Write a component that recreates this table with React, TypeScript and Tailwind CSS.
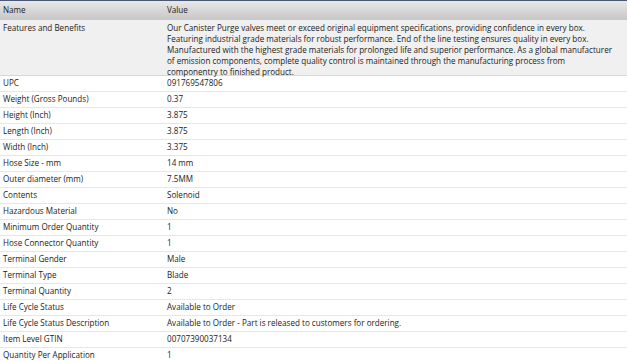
import React from "react";

const rows: [string, string][] = [
  ["UPC", "091769547806"],
  ["Weight (Gross Pounds)", "0.37"],
  ["Height (Inch)", "3.875"],
  ["Length (Inch)", "3.875"],
  ["Width (Inch)", "3.375"],
  ["Hose Size - mm", "14 mm"],
  ["Outer diameter (mm)", "7.5MM"],
  ["Contents", "Solenoid"],
  ["Hazardous Material", "No"],
  ["Minimum Order Quantity", "1"],
  ["Hose Connector Quantity", "1"],
  ["Terminal Gender", "Male"],
  ["Terminal Type", "Blade"],
  ["Terminal Quantity", "2"],
  ["Life Cycle Status", "Available to Order"],
  ["Life Cycle Status Description", "Available to Order - Part is released to customers for ordering."],
  ["Item Level GTIN", "00707390037134"],
  ["Quantity Per Application", "1"],
];

const features = [
  "Our Canister Purge valves meet or exceed original equipment specifications, providing confidence in every box.",
  "Featuring industrial grade materials for robust performance. End of the line testing ensures quality in every box.",
  "Manufactured with the highest grade materials for prolonged life and superior performance. As a global manufacturer",
  "of emission components, complete quality control is maintained through the manufacturing process from",
  "componentry to finished product.",
];

export default function App() {
  return (
    <div
      className="w-[627px] h-[361px] overflow-hidden bg-white text-[#222] text-[8.1px]"
      style={{ fontFamily: "'Open Sans', 'DejaVu Sans', sans-serif" }}
    >
      <div className="h-[20px] border-t border-[#4b5875] bg-gradient-to-b from-[#e8e8e8] to-[#c6c6c6] grid grid-cols-[167px_1fr] items-center pb-[1px]">
        <div className="pl-[3px]">Name</div>
        <div>Value</div>
      </div>
      <div className="h-[56px] bg-[#f0f0f0] border-b border-[#d8d8d8] grid grid-cols-[167px_1fr] pt-[2px] leading-[11px]">
        <div className="pl-[3px]">Features and Benefits</div>
        <div className="whitespace-nowrap">
          {features.map((l, i) => (
            <div key={i}>{l}</div>
          ))}
        </div>
      </div>
      {rows.map(([n, v], i) => (
        <div
          key={i}
          className="h-[16px] border-b border-[#e6e6e6] grid grid-cols-[167px_1fr] items-center pb-[1px]"
        >
          <div className="pl-[3px]">{n}</div>
          <div>{v}</div>
        </div>
      ))}
    </div>
  );
}
